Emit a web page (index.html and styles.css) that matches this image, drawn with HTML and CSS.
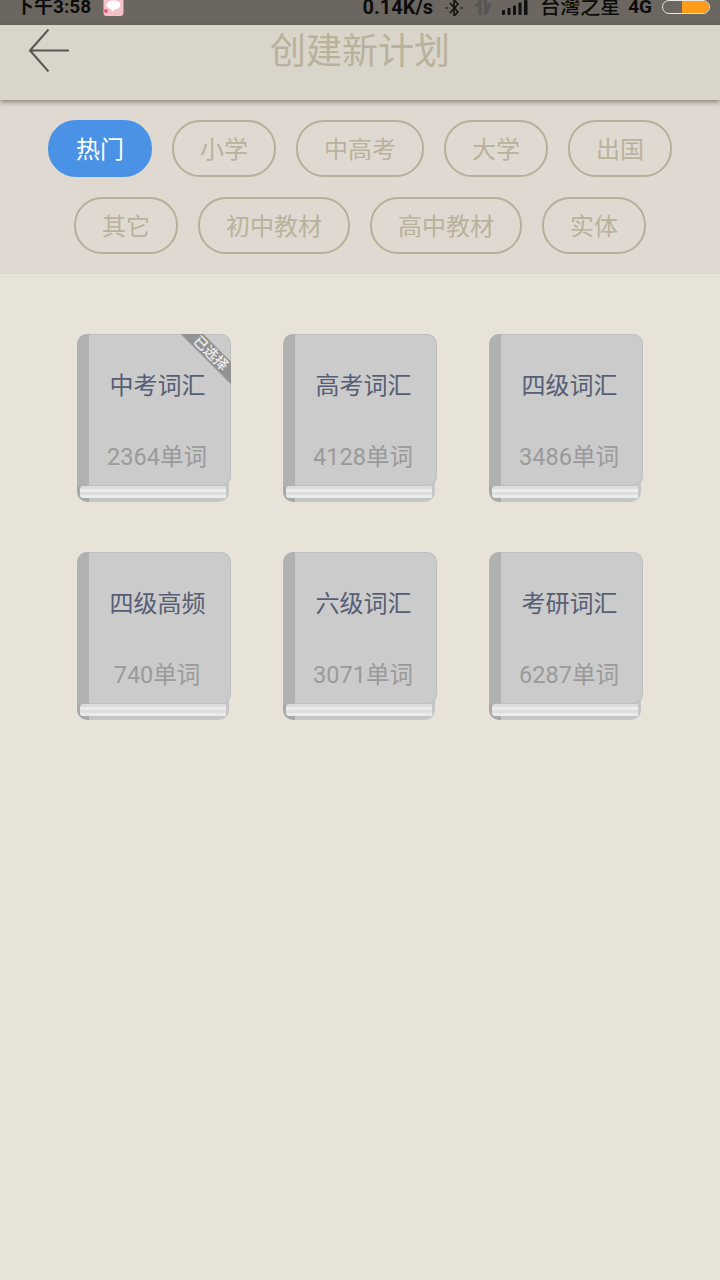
FILE: index.html
```html
<!DOCTYPE html>
<html lang="zh-CN">
<head>
<meta charset="utf-8">
<title>创建新计划</title>
<link rel="stylesheet" href="styles.css">
</head>
<body>
<div class="status">
  <div class="st-left">
    <span class="st-time">下午3:58</span>
    <svg class="st-line" width="21" height="16" viewBox="0 0 21 16"><path d="M0.500 0h20v13a3 3 0 0 1-3 3h-14a3 3 0 0 1-3-3z" fill="#f3c1c8"/><ellipse cx="10.500" cy="5" rx="7" ry="4.500" fill="#fff"/><path d="M8 8l1 4 4-4z" fill="#fff"/><circle cx="3" cy="11" r="2" fill="#ee5a78"/></svg>
  </div>
  <div class="st-right">
    <span class="st-speed">0.14K/s</span>
    <svg class="st-bt" width="18" height="16" viewBox="0 0 18 16"><path d="M5 3l8 9-4 4V0l4 4-8 9" fill="none" stroke="#111" stroke-width="1.600"/><path d="M0.500 8h2M15.500 8h2" stroke="#111" stroke-width="1.600"/></svg>
    <svg class="st-arrows" width="18" height="16" viewBox="0 0 18 16"><path d="M6 15V2L1.500 6.500M11.500 0v14L16.500 3" fill="none" stroke="#555" stroke-width="3"/></svg>
    <svg class="st-signal" width="26" height="15" viewBox="0 0 26 15"><rect x="0" y="10" width="3" height="5" rx="1" fill="#111"/><rect x="5.500" y="8" width="3" height="7" rx="1" fill="#111"/><rect x="11" y="5.500" width="3" height="9.500" rx="1" fill="#111"/><rect x="16.500" y="2.500" width="3" height="12.500" rx="1" fill="#111"/><rect x="22" y="0" width="3.500" height="15" rx="1" fill="#111"/></svg>
    <span class="st-carrier">台灣之星</span>
    <span class="st-net">4G</span>
    <span class="st-batt"><span class="st-batt-fill"></span></span>
  </div>
</div>

<header class="nav">
  <svg class="back" width="42" height="44" viewBox="0 0 42 44"><path d="M19.500 1.500L1 22.500l18.500 21M1 22.500h39" fill="none" stroke="#5a5752" stroke-width="2"/></svg>
  <h1 class="title">创建新计划</h1>
</header>

<section class="tabs">
  <div class="tab-row">
    <span class="tab tab-on">热门</span>
    <span class="tab">小学</span>
    <span class="tab">中高考</span>
    <span class="tab">大学</span>
    <span class="tab">出国</span>
  </div>
  <div class="tab-row">
    <span class="tab">其它</span>
    <span class="tab">初中教材</span>
    <span class="tab">高中教材</span>
    <span class="tab">实体</span>
  </div>
</section>

<main class="books">
  <article class="book">
    <div class="pages"><i></i><i></i><i></i><i></i></div>
    <div class="cover">
      <div class="name">中考词汇</div>
      <div class="count">2364单词</div>
      <div class="ribbon"><span>已选择</span></div>
    </div>
  </article>
  <article class="book">
    <div class="pages"><i></i><i></i><i></i><i></i></div>
    <div class="cover"><div class="name">高考词汇</div><div class="count">4128单词</div></div>
  </article>
  <article class="book">
    <div class="pages"><i></i><i></i><i></i><i></i></div>
    <div class="cover"><div class="name">四级词汇</div><div class="count">3486单词</div></div>
  </article>
  <article class="book">
    <div class="pages"><i></i><i></i><i></i><i></i></div>
    <div class="cover"><div class="name">四级高频</div><div class="count">740单词</div></div>
  </article>
  <article class="book">
    <div class="pages"><i></i><i></i><i></i><i></i></div>
    <div class="cover"><div class="name">六级词汇</div><div class="count">3071单词</div></div>
  </article>
  <article class="book">
    <div class="pages"><i></i><i></i><i></i><i></i></div>
    <div class="cover"><div class="name">考研词汇</div><div class="count">6287单词</div></div>
  </article>
</main>
</body>
</html>
```
FILE: styles.css
```css
* { box-sizing: border-box; }
html, body { margin: 0; padding: 0; }
body {
  width: 720px;
  height: 1280px;
  overflow: hidden;
  background: #e7e3d9;
  font-family: Roboto, "Noto Sans CJK SC", sans-serif;
  display: flex;
  flex-direction: column;
}

/* status bar */
.status {
  height: 25px;
  background: #6b6760;
  display: flex;
  justify-content: space-between;
  overflow: hidden;
  color: #0c0c0c;
  font-weight: 700;
  font-size: 19px;
  line-height: 16px;
  flex: none;
}
.st-left { display: flex; align-items: flex-start; padding-left: 15px; }
.st-time { margin-right: 12px; margin-top: -1px; }
.st-right { display: flex; align-items: flex-start; padding-right: 10px; }
.st-speed { margin-top: -1px; margin-right: 12px; font-size: 20px; }
.st-bt { margin-right: 11px; }
.st-arrows { margin-right: 10px; }
.st-signal { margin-right: 12px; }
.st-carrier { margin-top: -1px; margin-right: 8px; font-size: 20px; font-weight: 500; }
.st-net { margin-top: -1px; margin-right: 10px; }
.st-batt {
  width: 48px;
  height: 14px;
  border: 1px solid #e8e8e8;
  border-radius: 7px;
  background: #6b6760;
  overflow: hidden;
  display: flex;
  justify-content: flex-end;
}
.st-batt-fill { width: 27px; background: #ff9c1a; }

/* nav */
.nav {
  height: 75px;
  flex: none;
  background: #d9d5ca;
  display: flex;
  justify-content: center;
  position: relative;
  z-index: 1;
  box-shadow: 0 2px 5px rgba(60, 55, 45, 0.55);
}
.back { position: absolute; left: 29px; top: 3px; }
.title {
  margin: 6px 0 0;
  font-size: 36px;
  line-height: 42px;
  font-weight: 400;
  color: #b9b19b;
}

/* tabs */
.tabs {
  height: 174px;
  flex: none;
  background: #e0d9d2;
  border-bottom: 1px solid #d9d5ca;
  padding-top: 20px;
  display: flex;
  flex-direction: column;
  gap: 20px;
}
.tab-row { display: flex; justify-content: center; gap: 20px; }
.tab {
  height: 57px;
  padding: 0 26px;
  border: 2px solid #b7af98;
  border-radius: 28px;
  font-size: 24px;
  line-height: 56px;
  color: #b9b19b;
  text-align: center;
}
.tab-on { background: #4a92e6; border-color: #4a92e6; color: #fff; }

/* books */
.books {
  display: grid;
  grid-template-columns: repeat(3, 154px);
  column-gap: 52px;
  row-gap: 50px;
  padding: 60px 0 0 77px;
}
.book {
  position: relative;
  height: 168px;
}
.cover {
  position: absolute;
  left: 0;
  top: 0;
  width: 154px;
  height: 152px;
  background: linear-gradient(to right, #b1b1b1 0, #b1b1b1 12px, #cbcbcb 12px);
  border-radius: 10px 10px 10px 0;
  overflow: hidden;
  box-shadow: inset 0 0 0 1px rgba(180, 180, 180, 0.5);
}
.pages {
  position: absolute;
  left: 0;
  right: 2px;
  bottom: 0;
  height: 30px;
  background: linear-gradient(to right, #a9a9a9 0, #a9a9a9 12px, #c6c6c6 12px);
  border-radius: 0 0 10px 10px;
  padding: 14px 3px 0 3px;
  display: flex;
  flex-direction: column;
}
.pages i {
  display: block;
  height: 3px;
}
.pages i:nth-child(1) { background: #dcdcdc; border-top-left-radius: 3px; }
.pages i:nth-child(2) { background: #ececec; }
.pages i:nth-child(3) { background: #dedede; }
.pages i:nth-child(4) { background: #ebebeb; border-bottom-left-radius: 3px; }
.name {
  margin: 37px 0 0 7px;
  text-align: center;
  font-size: 24px;
  line-height: 30px;
  color: #555e75;
}
.count {
  margin: 41px 0 0 6px;
  text-align: center;
  font-size: 23.500px;
  line-height: 30px;
  color: #9a9a9a;
}
.ribbon {
  position: absolute;
  right: -31px;
  top: 11px;
  width: 102px;
  height: 16px;
  background: #939393;
  transform: rotate(45deg);
  text-align: center;
  color: #eee;
  font-size: 14px;
  font-weight: 500;
  line-height: 16px;
}
.ribbon span { display: block; }
```
